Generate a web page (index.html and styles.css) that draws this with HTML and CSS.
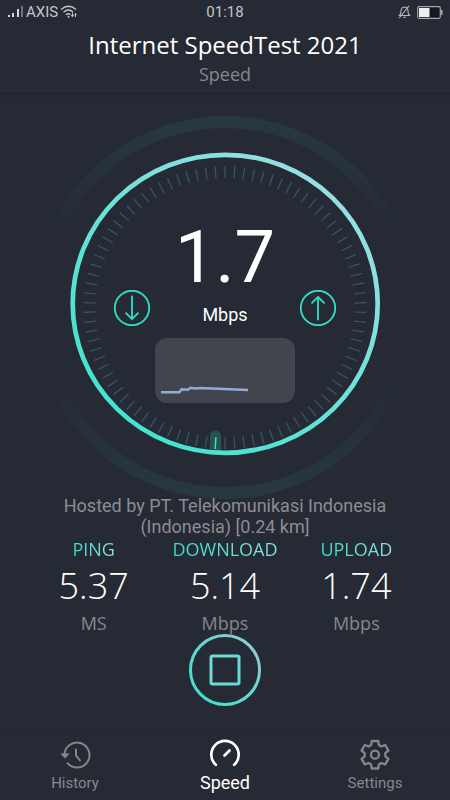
FILE: index.html
```html
<!DOCTYPE html>
<html lang="en">
<head>
<meta charset="utf-8">
<meta name="viewport" content="width=device-width, initial-scale=1">
<title>Internet SpeedTest 2021</title>
<link rel="stylesheet" href="styles.css">
</head>
<body>
<div class="app">
  <header class="top">
    <div class="status">
      <div class="status-left">
        <svg width="17" height="14" viewBox="0 0 17 14" aria-hidden="true">
          <path d="M1 10h2v2H1zM5 8h2v4H5zM10 4h2v8h-2z" fill="#d5d6d8"/>
          <path d="M14 1h2v11h-2z" fill="#70737a"/>
        </svg>
        <span>AXIS</span>
        <svg class="wifi" width="18" height="14" viewBox="0 0 18 14" fill="none" stroke="#c3c4c8" stroke-width="1.4" aria-hidden="true">
          <path d="M1 4.5Q8.500 -2 16 4.500M3.500 7.200Q8.500 3 13 7M6 9.800Q8.500 8 10.500 9.500"/>
          <circle cx="8.500" cy="11.800" r="1" fill="#c3c4c8" stroke="none"/>
          <path d="M12.500 7.500v4M11 10l1.500 1.800L14 10M15.500 12V8.500M14.500 9.500l1-1 1 1" stroke-width="1"/>
        </svg>
      </div>
      <time>01:18</time>
      <div class="status-right">
        <svg width="13" height="14" viewBox="0 0 13 14" fill="none" stroke="#b4b5ba" stroke-width="1.100" aria-hidden="true">
          <path d="M1.500 10.500Q3 9 3 6Q3 2.500 6.500 2Q10 2.500 10 6Q10 9 11.500 10.500ZM5 12.200h3M11 .8L1.200 13"/>
        </svg>
        <svg width="26" height="13" viewBox="0 0 26 13" aria-hidden="true">
          <rect x=".7" y=".7" width="22.600" height="11.600" rx="1.500" fill="#15181f" stroke="#a7a8ad" stroke-width="1.200"/>
          <path d="M2 2h10.500v9H2z" fill="#eeeeee"/>
          <path d="M24 4h1.500v5H24z" fill="#a7a8ad"/>
        </svg>
      </div>
    </div>
    <h1>Internet SpeedTest 2021</h1>
    <p class="subtitle">Speed</p>
  </header>

  <main>
    <section class="gauge" aria-label="Current speed">
      <svg class="dial" viewBox="0 0 450 383" aria-hidden="true">
        <defs>
          <linearGradient id="ring" gradientUnits="userSpaceOnUse" x1="150" y1="310" x2="330" y2="90">
            <stop offset="0" stop-color="#45e3d1"/>
            <stop offset="1" stop-color="#93dfe2"/>
          </linearGradient>
          <linearGradient id="halo" gradientUnits="userSpaceOnUse" x1="0" y1="0" x2="0" y2="383">
            <stop offset="0" stop-color="#2ee6c5" stop-opacity=".08"/>
            <stop offset=".32" stop-color="#2ee6c5" stop-opacity="0"/>
            <stop offset=".68" stop-color="#2ee6c5" stop-opacity="0"/>
            <stop offset="1" stop-color="#2ee6c5" stop-opacity=".08"/>
          </linearGradient>
        </defs>
        <circle cx="225" cy="191.500" r="185.500" fill="none" stroke="url(#halo)" stroke-width="12"/>
        <circle cx="225" cy="191.500" r="135.500" fill="none" stroke="#315973" stroke-width="12" pathLength="900" stroke-dasharray="1.300 8.700" stroke-dashoffset="5.650"/>
        <path d="M215.500 320v13" stroke="#27534f" stroke-width="11" stroke-linecap="round"/>
        <path d="M215.900 321L215.200 333" stroke="#45e3c5" stroke-width="1.400"/>
        <ellipse cx="225.200" cy="187.800" rx="152.500" ry="149" fill="none" stroke="url(#ring)" stroke-width="4.700"/>
      </svg>
      <div class="readout">
        <svg class="arrow" width="36" height="36" viewBox="0 0 36 36" role="img" aria-label="Download">
          <circle cx="18" cy="18" r="17.200"/>
          <path d="M18 6.500V29M12 23.200l6 6 6-6"/>
        </svg>
        <div class="reading">
          <div class="speed">1.7</div>
          <div class="speed-unit">Mbps</div>
          <svg class="chart" viewBox="0 0 140 65" fill="none" aria-hidden="true">
            <path d="M6 54.200H24.500L26.500 51.300L33 51.700L35.500 49.700L41 50.500L45 50L93 52" stroke="#92add3" stroke-width="2.400"/>
          </svg>
        </div>
        <svg class="arrow" width="36" height="36" viewBox="0 0 36 36" role="img" aria-label="Upload">
          <circle cx="18" cy="18" r="17.200"/>
          <path d="M18 29.500V7M12 12.800l6-6 6 6"/>
        </svg>
      </div>
    </section>

    <p class="host">Hosted by PT. Telekomunikasi Indonesia (Indonesia) [0.24 km]</p>

    <section class="results">
      <div class="result">
        <h2>PING</h2>
        <p class="value">5.37</p>
        <p class="unit">MS</p>
      </div>
      <div class="result">
        <h2>DOWNLOAD</h2>
        <p class="value">5.14</p>
        <p class="unit">Mbps</p>
      </div>
      <div class="result">
        <h2>UPLOAD</h2>
        <p class="value">1.74</p>
        <p class="unit">Mbps</p>
      </div>
    </section>

    <button class="stop" type="button" aria-label="Stop test">
      <svg width="72" height="72" viewBox="0 0 72 72" fill="none" aria-hidden="true">
        <defs>
          <linearGradient id="stopring" x1="0" y1="1" x2="1" y2="0">
            <stop offset=".2" stop-color="#45e0cf"/>
            <stop offset=".8" stop-color="#83cfd2"/>
          </linearGradient>
        </defs>
        <circle cx="36" cy="36" r="34.500" stroke="url(#stopring)" stroke-width="3"/>
        <rect x="22" y="22" width="28" height="28" rx="1.500" stroke="#68dbd4" stroke-width="3"/>
      </svg>
    </button>
  </main>

  <nav class="tabs">
    <a href="#history">
      <svg width="32" height="32" viewBox="0 0 32 32" fill="none" stroke="currentColor" stroke-width="2" aria-hidden="true">
        <path d="M5.500 16.500A12.500 12.500 0 1 1 8.500 24.200" stroke-linecap="round"/>
        <path d="M1.200 14.500h9.600L6 19.500z" fill="currentColor" stroke="none"/>
        <path d="M17 10.500V16.500L21 21.500" stroke-linecap="round"/>
      </svg>
      <span>History</span>
    </a>
    <a class="active" href="#speed" aria-current="page">
      <svg width="32" height="32" viewBox="0 0 32 32" fill="none" stroke="currentColor" stroke-width="2.700" stroke-linecap="round" aria-hidden="true">
        <path d="M6.800 25.800A13.700 13.700 0 1 1 25.200 25.800"/>
        <path d="M15.500 16.500L20.500 11.500"/>
      </svg>
      <span>Speed</span>
    </a>
    <a href="#settings">
      <svg width="32" height="32" viewBox="0 0 32 32" fill="none" stroke="currentColor" stroke-width="2.300" stroke-linejoin="round" aria-hidden="true">
        <path d="M12.800 2H19.200L19.900 6L22.300 7.400L26.200 6L29.400 11.500L26.300 14.100V17.300L29.400 19.900L26.200 25.400L22.300 24L19.900 25.400L19.200 29.500H12.800L12.100 25.400L9.700 24L5.800 25.400L2.600 19.900L5.700 17.300V14.100L2.600 11.500L5.800 6L9.700 7.400L12.100 6Z"/>
        <circle cx="16" cy="15.700" r="4"/>
      </svg>
      <span>Settings</span>
    </a>
  </nav>
</div>
</body>
</html>
```
FILE: styles.css
```css
* {
  box-sizing: border-box;
}

body {
  margin: 0;
  background: #262a34;
  color: #fff;
  font-family: "Open Sans", sans-serif;
}

h1, h2, p {
  margin: 0;
  font-weight: 400;
}

svg {
  display: block;
}

.app {
  display: flex;
  flex-direction: column;
  min-height: 100vh;
}

.top {
  text-align: center;
  padding-bottom: 10px;
  border-bottom: 1px solid #21252d;
  box-shadow: 0 1px 2px #20242c;
}

.status {
  display: grid;
  grid-template-columns: 1fr auto 1fr;
  align-items: center;
  height: 24px;
  padding: 0 7px;
  color: #c5c6ca;
  font: 15px/24px Roboto, sans-serif;
}

.status-left,
.status-right {
  display: flex;
  align-items: center;
}

.status-left {
  gap: 2px;
}

.status-right {
  justify-content: flex-end;
  gap: 6px;
}

h1 {
  font-size: 24px;
  line-height: 42px;
}

.subtitle {
  color: #85878c;
  font-size: 18px;
  line-height: 16px;
}

main {
  flex: 1;
  display: flex;
  flex-direction: column;
  align-items: center;
  padding-top: 23px;
}

.gauge {
  display: grid;
  place-items: center;
  width: 100%;
}

.dial,
.readout {
  grid-area: 1 / 1;
}

.dial {
  width: 100%;
  max-width: 450px;
}

.readout {
  display: flex;
  align-items: center;
  gap: 5px;
}

.arrow {
  fill: none;
  stroke: #32dfc6;
  stroke-width: 1.8;
  stroke-linecap: round;
  stroke-linejoin: round;
}

.reading {
  width: 140px;
  text-align: center;
  font-family: Roboto, sans-serif;
}

.speed {
  font-size: 72px;
  line-height: 90px;
}

.speed-unit {
  font-size: 18px;
  line-height: 24px;
}

.chart {
  width: 100%;
  margin-top: 11px;
  border-radius: 12px;
  background: #42454e;
}

.host {
  max-width: 360px;
  margin-top: -4px;
  color: #8b8d92;
  font: 18px/21px Roboto, sans-serif;
  text-align: center;
}

.results {
  display: grid;
  grid-template-columns: repeat(3, 1fr);
  width: 100%;
  padding: 0 28px;
  text-align: center;
}

.result {
  display: flex;
  flex-direction: column;
  align-items: center;
}

h2 {
  font-size: 18px;
  line-height: 24px;
  color: transparent;
  background: linear-gradient(90deg, #38e0c8, #8edfe0);
  background-clip: text;
  -webkit-background-clip: text;
}

.value {
  font-size: 36px;
  font-weight: 300;
  line-height: 50px;
}

.unit {
  color: #85878c;
  font-size: 18px;
  line-height: 24px;
}

.stop {
  margin-top: -1px;
  padding: 0;
  border: 0;
  border-radius: 50%;
  background: none;
}

.tabs {
  display: grid;
  grid-template-columns: repeat(3, 1fr);
  height: 71px;
  border-top: 1px solid #22252e;
}

.tabs a {
  display: flex;
  flex-direction: column;
  align-items: center;
  padding-top: 9px;
  color: #85878c;
  font: 15px/24px Roboto, sans-serif;
  text-decoration: none;
}

.tabs .active {
  color: #fff;
  font-size: 18px;
}
```
